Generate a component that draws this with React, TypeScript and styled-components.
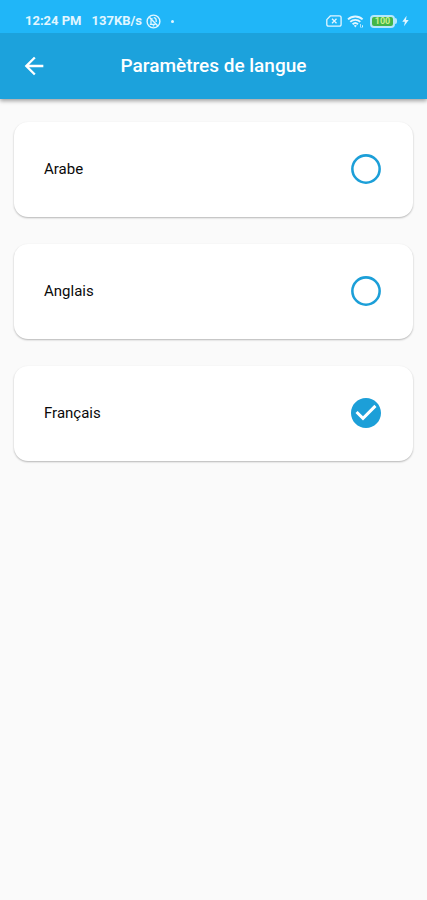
import { useState } from "react";
import styled, { createGlobalStyle } from "styled-components";

const GlobalStyle = createGlobalStyle`
  * { box-sizing: border-box; }
  body {
    margin: 0;
    background: #fafafa;
    font-family: Roboto, "Liberation Sans", sans-serif;
  }
`;

const Screen = styled.div`
  min-height: 100vh;
  background: #fafafa;
`;

const Header = styled.header`
  color: #ffffff;
  background: #1ca2dc;
  box-shadow: 0 2px 4px rgba(0, 0, 0, 0.36);
`;

const StatusBar = styled.div`
  display: flex;
  align-items: center;
  justify-content: space-between;
  height: 33px;
  padding: 9px 18px 0 25px;
  background: #20b6f8;
  color: #e2f6ff;
  font-size: 13px;
  font-weight: 700;
  line-height: 16px;
`;

const StatusGroup = styled.div<{ $gap: number }>`
  display: flex;
  align-items: center;
  gap: ${({ $gap }) => $gap}px;
`;

const NetworkSpeed = styled.span`
  display: flex;
  align-items: center;
  gap: 4px;
`;

const NotificationDot = styled.span`
  width: 3px;
  height: 3px;
  border-radius: 50%;
  background: currentColor;
`;

const Battery = styled.span`
  display: flex;
  align-items: center;
`;

const BatteryBody = styled.span`
  display: flex;
  align-items: center;
  justify-content: center;
  width: 25px;
  height: 13px;
  border: 2px solid #b5e8fc;
  border-radius: 4px;
  background: #43b649;
  color: #c8f08c;
  font-size: 9px;
  line-height: 9px;
`;

const BatteryTip = styled.span`
  width: 2px;
  height: 6px;
  border-radius: 0 2px 2px 0;
  background: #b5e8fc;
`;

const AppBar = styled.div`
  display: grid;
  grid-template-columns: 48px 1fr 48px;
  align-items: center;
  height: 66px;
  padding: 0 10px;
`;

const BackButton = styled.button`
  display: flex;
  align-items: center;
  justify-content: center;
  width: 48px;
  height: 48px;
  padding: 0;
  border: 0;
  background: transparent;
  color: inherit;
  cursor: pointer;
`;

const Title = styled.h1`
  margin: 0;
  font-size: 19px;
  font-weight: 500;
  line-height: 24px;
  text-align: center;
`;

const LanguageList = styled.main`
  display: flex;
  flex-direction: column;
  gap: 27px;
  padding: 23px 14px;
`;

const LanguageCard = styled.label`
  display: flex;
  align-items: center;
  justify-content: space-between;
  padding: 29px 29px 30px 30px;
  border-radius: 14px;
  background: #ffffff;
  box-shadow: 0 1px 2px rgba(0, 0, 0, 0.28);
  color: #0a0a0a;
  font-size: 15px;
  line-height: 20px;
  cursor: pointer;
`;

const RadioSlot = styled.span`
  display: grid;
  width: 36px;
  height: 36px;
  color: #1c9fd8;

  > * {
    grid-area: 1 / 1;
  }
`;

const RadioInput = styled.input`
  width: 36px;
  height: 36px;
  margin: 0;
  opacity: 0;
  cursor: pointer;

  &:focus-visible + svg {
    outline: 2px solid #1c9fd8;
    border-radius: 50%;
  }
`;

const SilentIcon = () => (
  <svg width="15" height="15" viewBox="0 0 15 15" fill="none" stroke="currentColor" aria-hidden="true">
    <circle cx="7.5" cy="7.5" r="6.4" strokeWidth="1.4" />
    <path d="M3.8 10.3h5.7M5 9.8V7c0-1.2.5-2.2 1.4-2.7M7.7 3.7c1.5.1 2.5 1.3 2.5 2.8v1.4M6.7 11.8h1.6" strokeWidth="1.3" />
    <path d="m3.4 3.3 8.5 8.7" strokeWidth="1.4" />
  </svg>
);

const NoSimIcon = () => (
  <svg width="16" height="12" viewBox="0 0 16 12" fill="none" stroke="currentColor" aria-hidden="true">
    <path d="M4.5.8h8.7c1.2 0 1.9.7 1.9 1.8v6.8c0 1.1-.7 1.8-1.9 1.8H2.7C1.5 11.2.8 10.5.8 9.4V4.6z" strokeWidth="1.3" strokeLinejoin="round" />
    <path d="m6 3.7 4.5 4.6m0-4.6L6 8.3" strokeWidth="1.3" />
  </svg>
);

const WifiIcon = () => (
  <svg width="18" height="13" viewBox="0 0 18 13" fill="none" stroke="currentColor" aria-hidden="true">
    <path d="M1 4.4a10.6 10.6 0 0 1 14.6 0M3.3 6.9a7.2 7.2 0 0 1 10 0M5.6 9.3a4 4 0 0 1 5.4 0" strokeWidth="1.9" />
    <path d="m6.8 10.6 1.5 1.9 1.5-1.9a2.2 2.2 0 0 0-3 0z" fill="currentColor" stroke="none" />
    <path d="M13.5 9v3.5M15.5 12.5V10m-1 2.5 1.5-1.5" strokeWidth="1" opacity=".7" />
  </svg>
);

const BoltIcon = () => (
  <svg width="7" height="12" viewBox="0 0 7 12" fill="currentColor" aria-hidden="true">
    <path d="M4.6.8.3 6.7h2.6L2 11.3l4.7-6.2H4z" />
  </svg>
);

const BackIcon = () => (
  <svg width="28" height="28" viewBox="0 0 24 24" fill="currentColor" aria-hidden="true">
    <path d="M20 11H7.83l5.59-5.59L12 4l-8 8 8 8 1.41-1.41L7.83 13H20v-2z" />
  </svg>
);

const RadioIcon = ({ checked }: { checked: boolean }) => (
  <svg width="36" height="36" viewBox="0 0 24 24" fill="currentColor" aria-hidden="true">
    {checked ? (
      <path d="M12 2C6.48 2 2 6.48 2 12s4.48 10 10 10 10-4.48 10-10S17.52 2 12 2zm-2 15-5-5 1.41-1.41L10 14.17l7.59-7.59L19 8l-9 9z" />
    ) : (
      <circle cx="12" cy="12" r="9.1" fill="none" stroke="currentColor" strokeWidth="1.7" />
    )}
  </svg>
);

const languages = [
  { code: "ar", label: "Arabe" },
  { code: "en", label: "Anglais" },
  { code: "fr", label: "Français" },
];

export default function App() {
  const [selected, setSelected] = useState("fr");

  return (
    <Screen lang="fr">
      <GlobalStyle />
      <Header>
        <StatusBar>
          <StatusGroup $gap={10}>
            <span>12:24 PM</span>
            <NetworkSpeed>
              137KB/s
              <SilentIcon />
            </NetworkSpeed>
            <NotificationDot />
          </StatusGroup>
          <StatusGroup $gap={5}>
            <NoSimIcon />
            <WifiIcon />
            <Battery>
              <BatteryBody>100</BatteryBody>
              <BatteryTip />
            </Battery>
            <BoltIcon />
          </StatusGroup>
        </StatusBar>
        <AppBar>
          <BackButton type="button" aria-label="Retour">
            <BackIcon />
          </BackButton>
          <Title>Paramètres de langue</Title>
        </AppBar>
      </Header>
      <LanguageList role="radiogroup" aria-label="Paramètres de langue">
        {languages.map(({ code, label }) => (
          <LanguageCard key={code}>
            {label}
            <RadioSlot>
              <RadioInput
                type="radio"
                name="language"
                value={code}
                checked={selected === code}
                onChange={() => setSelected(code)}
              />
              <RadioIcon checked={selected === code} />
            </RadioSlot>
          </LanguageCard>
        ))}
      </LanguageList>
    </Screen>
  );
}
